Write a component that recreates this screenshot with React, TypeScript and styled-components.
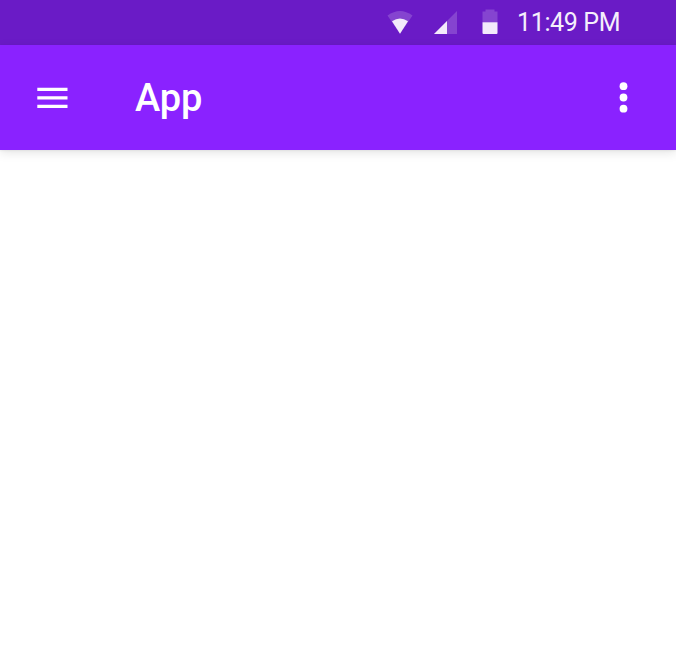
import React from "react";
import styled, { createGlobalStyle } from "styled-components";

const GlobalStyle = createGlobalStyle`
  * { box-sizing: border-box; }
  body { margin: 0; background: #fff; font-family: Roboto, sans-serif; overflow: hidden; }
  svg { display: block; flex: none; }
`;

const Screen = styled.div`
  display: flex;
  flex-direction: column;
  height: 646px;
`;

const StatusBar = styled.header`
  display: flex;
  align-items: center;
  justify-content: flex-end;
  flex: none;
  height: 45px;
  padding-right: 56px;
  background: #6a1bc6;
`;

const StatusIcons = styled.div`
  display: flex;
  margin-right: 19px;
`;

const Clock = styled.time`
  width: 103px;
  height: 45px;
  font-size: 25px;
  line-height: 45px;
  letter-spacing: -0.35px;
  white-space: nowrap;
  color: #f5effc;
`;

const AppBar = styled.nav`
  display: flex;
  align-items: center;
  flex: none;
  height: 105px;
  padding: 0 48px 0 37px;
  background: #8a22ff;
  box-shadow: 0 3px 10px rgba(0, 0, 0, 0.1), 0 1px 2px rgba(0, 0, 0, 0.06);
`;

const IconButton = styled.button`
  padding: 0;
  border: 0;
  background: none;
  color: #fff;
`;

const Title = styled.h1`
  flex: 1;
  margin: 0 0 0 67px;
  font-size: 38px;
  font-weight: 500;
  line-height: 106px;
  letter-spacing: -0.1px;
  color: #fff;
`;

const Content = styled.main`
  flex: 1;
`;

export default function App() {
  return (
    <>
      <GlobalStyle />
      <Screen>
        <StatusBar>
          <StatusIcons>
            <svg width="111" height="45" viewBox="0 0 111 45" fill="#f3eafb">
              <path d="M0.5 15.5Q13 6.5 25.5 15.5L13 33.7Z" opacity=".2" />
              <path d="M5 21.2Q13 16 21 21.2L13 33.7Z" />
              <path d="M47 34L70 11V34Z" opacity=".2" />
              <path d="M47 34L60 21V34Z" />
              <path d="M95.5 11.5H98.5V9.5H107.5V11.5H110.5V22.3H95.5Z" opacity=".2" />
              <path d="M95.5 22.3H110.5V33Q110.5 34 109.5 34H96.5Q95.5 34 95.5 33Z" />
            </svg>
          </StatusIcons>
          <Clock>11:49 PM</Clock>
        </StatusBar>
        <AppBar>
          <IconButton aria-label="Open menu">
            <svg width="31" height="22" viewBox="0 0 31 22" fill="currentColor">
              <path d="M.3.7h30.2V4H.3zM.3 9.2h30.2v3.3H.3zM.3 17.7h30.2V21H.3z" />
            </svg>
          </IconButton>
          <Title>App</Title>
          <IconButton aria-label="More options">
            <svg width="9" height="31" viewBox="0 0 9 31" fill="currentColor">
              <circle cx="4.5" cy="4.2" r="3.9" />
              <circle cx="4.5" cy="15.5" r="3.9" />
              <circle cx="4.5" cy="26.7" r="3.9" />
            </svg>
          </IconButton>
        </AppBar>
        <Content />
      </Screen>
    </>
  );
}
